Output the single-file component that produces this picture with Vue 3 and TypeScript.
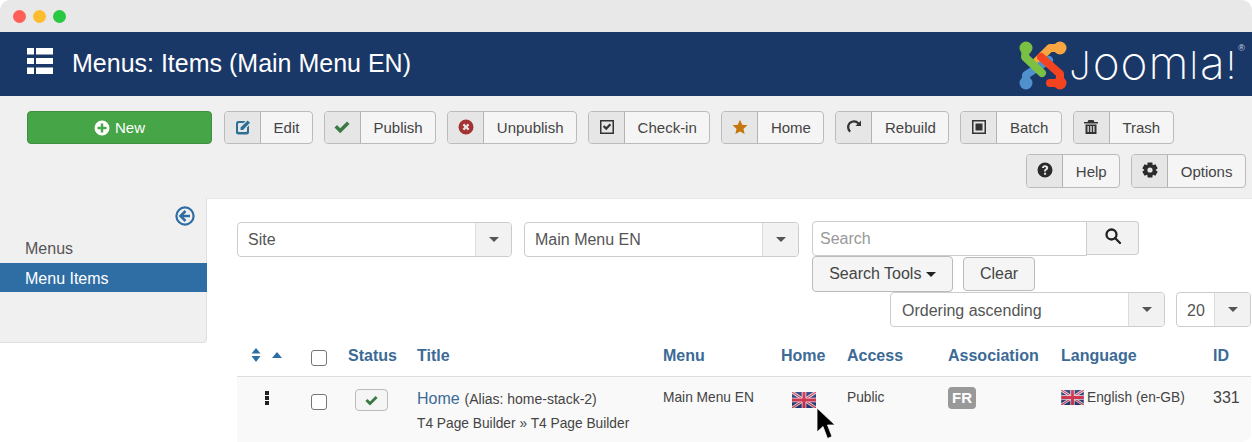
<script setup lang="ts">
interface ToolButton {
  label: string
  color: string
  d: string
}

// six toothed cog, hole punched with evenodd
function cogPath(): string {
  const pts: string[] = []
  for (let i = 0; i < 6; i++) {
    const a = (i * Math.PI) / 3 - Math.PI / 2
    const w = 0.3
    const ps = [
      [5.6, a - 0.52],
      [7.9, a - w],
      [7.9, a + w],
      [5.6, a + 0.52],
    ]
    ps.forEach(([r, t]) => {
      pts.push(`${(8 + r * Math.cos(t)).toFixed(2)} ${(8 + r * Math.sin(t)).toFixed(2)}`)
    })
  }
  return `M${pts.join('L')}z M8 5.4a2.6 2.6 0 1 0 0 5.2 2.6 2.6 0 0 0 0-5.2z`
}

const firstRow: ToolButton[] = [
  { label: 'Edit', color: '#2f6f96', d: 'M3 2h7.5L8.5 4H4a1 1 0 0 0-1 1v7a1 1 0 0 0 1 1h7a1 1 0 0 0 1-1V8.5l2-2V13a2.5 2.5 0 0 1-2.500 2.500H3.500A2.500 2.500 0 0 1 1 13V4.500A2.500 2.500 0 0 1 3 2z M12.700 1.500l2.300 2.300L8 11H5.500V8.500z' },
  { label: 'Publish', color: '#3b7a42', d: 'M.5 8.500L3 6l3.200 3.200L13 2.500 15.500 5 6.200 14.200z' },
  { label: 'Unpublish', color: '#a33232', d: 'M8 .5a7.500 7.500 0 1 0 0 15 7.500 7.500 0 0 0 0-15z M4.600 6.200L6.200 4.600 8 6.400l1.800-1.800 1.600 1.600L9.600 8l1.800 1.800-1.600 1.600L8 9.600l-1.800 1.800-1.600-1.600L6.400 8z' },
  { label: 'Check-in', color: '#333333', d: 'M1 1h14v14H1z M2.500 2.500v11h11v-11z M3.800 7.800l1.600-1.600 1.800 1.800 3.400-3.500 1.600 1.600-5 5.100z' },
  { label: 'Home', color: '#c4770c', d: 'M8 .8l2.200 4.900 5.300.6-4 3.500 1.100 5.300L8 12.400l-4.600 2.700 1.100-5.300-4-3.500 5.300-.6z' },
  { label: 'Rebuild', color: '#333333', d: 'M15 1.500v5.500H9.500l2-2A4.700 4.700 0 0 0 3.300 8c0 1.500.6 2.900 1.700 3.800l-1.600 1.700A7 7 0 0 1 1 8a7 7 0 0 1 12.100-4.500z' },
  { label: 'Batch', color: '#333333', d: 'M1 1h14v14H1z M2.500 2.500v11h11v-11z M4.500 4.500h7v7h-7z' },
  { label: 'Trash', color: '#333333', d: 'M5.500 1h5l1 2H15v1.500H1V3h3.500z M2.500 5.500h11V15h-11z M4.500 7v6h1.300V7z M7.300 7v6h1.400V7z M10.200 7v6h1.300V7z' },
]

const secondRow: ToolButton[] = [
  { label: 'Help', color: '#2b2b2b', d: 'M8 .5a7.500 7.500 0 1 0 0 15 7.500 7.500 0 0 0 0-15z M7 10.800h2.100v2H7z M4.900 6C5 4.300 6.300 3.200 8.100 3.200c1.800 0 3.100 1.100 3.100 2.600 0 1.200-.7 1.800-1.400 2.300-.5.400-.7.600-.7 1.300H7c0-1.200.4-1.800 1.100-2.300.5-.4.900-.7.900-1.200 0-.5-.4-.8-1-.8-.6 0-1 .4-1.100 1z' },
  { label: 'Options', color: '#2b2b2b', d: cogPath() },
]

const columns: string[] = ['Menu', 'Home', 'Access', 'Association', 'Language', 'ID']
</script>

<template>
  <div class="window">
    <svg class="defs" width="0" height="0">
      <defs>
        <linearGradient id="shine" x1="0" y1="0" x2="0" y2="1">
          <stop offset="0" stop-color="#fff" stop-opacity="0.12" />
          <stop offset="1" stop-color="#000" stop-opacity="0.12" />
        </linearGradient>
        <symbol id="uk" viewBox="0 0 24 16">
          <rect width="24" height="16" fill="#28397a" />
          <path d="M0 0L24 16M24 0L0 16" stroke="#efe6ea" stroke-width="2.800" />
          <path d="M0 0L24 16M24 0L0 16" stroke="#d8405a" stroke-width="1.200" />
          <path d="M12 0V16M0 8H24" stroke="#f2e6ea" stroke-width="4.600" />
          <path d="M12 0V16M0 8H24" stroke="#d92d4c" stroke-width="3" />
          <rect width="24" height="16" fill="url(#shine)" />
        </symbol>
      </defs>
    </svg>

    <div class="titlebar">
      <span class="light red"></span>
      <span class="light amber"></span>
      <span class="light green"></span>
    </div>

    <header class="masthead">
      <svg class="menu-icon" viewBox="0 0 26 26" width="26" height="26" fill="#fff">
        <path d="M0 0h7v6.500H0z M9 0h17v6.500H9z M0 10h7v6H0z M9 10h17v6H9z M0 19.500h7V26H0z M9 19.500h17V26H9z" />
      </svg>
      <h1>Menus: Items (Main Menu EN)</h1>
      <div class="brand">
        <svg class="brand-mark" viewBox="0 0 60 54" width="60" height="54" fill="none" stroke-linecap="round" stroke-linejoin="round">
          <path d="M46 10L36 10L20 26" stroke="#f9a541" stroke-width="8" />
          <circle cx="46" cy="10" r="6.500" fill="#f9a541" />
          <path d="M12 45L12 37L35 22" stroke="#5091cd" stroke-width="8" />
          <circle cx="12" cy="45" r="6.500" fill="#5091cd" />
          <path d="M12 9L11 19L28 35" stroke="#7ac143" stroke-width="8" />
          <circle cx="12" cy="10" r="6.500" fill="#7ac143" />
          <path d="M27 19L46 36L46 45L36 45" stroke="#f44321" stroke-width="8" />
          <circle cx="46" cy="45" r="6.500" fill="#f44321" />
        </svg>
        <span class="wordmark"><span class="tall-letter">J</span><span class="round">oom</span><span class="tall-letter">l</span><span class="round">a</span><span class="tall-letter">!</span></span>
        <sup class="reg">®</sup>
      </div>
    </header>

    <section class="toolbar">
      <div class="tool-row">
        <button class="btn-new">
          <svg viewBox="0 0 16 16" width="16" height="16" fill="#fff" fill-rule="evenodd">
            <path d="M8 .5a7.500 7.500 0 1 0 0 15 7.500 7.500 0 0 0 0-15z M6.800 3.500h2.400v3.300h3.300v2.400H9.200v3.300H6.800V9.200H3.500V6.800h3.300z" />
          </svg>
          New
        </button>
        <button v-for="b in firstRow" :key="b.label" class="tool">
          <span class="tool-icon">
            <svg viewBox="0 0 16 16" width="16" height="16" fill-rule="evenodd" :fill="b.color"><path :d="b.d" /></svg>
          </span>
          <span class="tool-label">{{ b.label }}</span>
        </button>
      </div>
      <div class="tool-row right">
        <button v-for="b in secondRow" :key="b.label" class="tool tall">
          <span class="tool-icon">
            <svg viewBox="0 0 16 16" width="16" height="16" fill-rule="evenodd" :fill="b.color"><path :d="b.d" /></svg>
          </span>
          <span class="tool-label">{{ b.label }}</span>
        </button>
      </div>
    </section>

    <div class="body">
      <aside class="sidebar">
        <div class="collapse">
          <svg viewBox="0 0 20 20" width="20" height="20" fill="none" stroke="#2f6ea5">
            <circle cx="10" cy="10" r="8.600" stroke-width="2.200" />
            <path d="M10.500 5L5.500 10l5 5M6 10h9" stroke-width="2.600" />
          </svg>
        </div>
        <a class="side-link">Menus</a>
        <a class="side-link active">Menu Items</a>
      </aside>

      <main class="content">
        <div class="filters">
          <div class="select wide"><span>Site</span><i class="select-arrow"><b class="caret"></b></i></div>
          <div class="select wide"><span>Main Menu EN</span><i class="select-arrow"><b class="caret"></b></i></div>
          <div class="search-group">
            <div class="search-line">
              <div class="search-input">Search</div>
              <button class="search-btn">
                <svg viewBox="0 0 16 16" width="16" height="16" fill="none" stroke="#222" stroke-width="2.300">
                  <circle cx="6.500" cy="6.500" r="5" />
                  <path d="M10 10l5 5" stroke-linecap="round" />
                </svg>
              </button>
            </div>
            <div class="search-actions">
              <button class="plain tools">Search Tools <b class="caret dark"></b></button>
              <button class="plain clear">Clear</button>
            </div>
          </div>
        </div>

        <div class="ordering">
          <div class="select wide"><span>Ordering ascending</span><i class="select-arrow"><b class="caret"></b></i></div>
          <div class="select small"><span>20</span><i class="select-arrow"><b class="caret"></b></i></div>
        </div>

        <div class="grid head">
          <div class="sort">
            <svg viewBox="0 0 10 14" width="10" height="14" fill="#2f6ea5"><path d="M5 0l4.500 5.500h-9zM5 14L.5 8h9z" /></svg>
            <svg viewBox="0 0 10 6" width="10" height="6" fill="#2f6ea5"><path d="M5 0l5 6H0z" /></svg>
          </div>
          <div><span class="check"></span></div>
          <div>Status</div>
          <div>Title</div>
          <div v-for="c in columns" :key="c">{{ c }}</div>
        </div>

        <div class="grid row">
          <div class="drag"><i></i><i></i><i></i></div>
          <div class="check-cell"><span class="check"></span></div>
          <div>
            <span class="status-btn">
              <svg viewBox="0 0 16 16" width="13" height="13" fill="#3b7a42"><path d="M.5 8.500L3 6l3.200 3.200L13 2.500 15.500 5 6.200 14.200z" /></svg>
            </span>
          </div>
          <div class="title-cell">
            <div class="title-line"><a class="item-link">Home</a> <span class="alias">(Alias: home-stack-2)</span></div>
            <div class="item-type">T4 Page Builder » T4 Page Builder</div>
          </div>
          <div class="small-text">Main Menu EN</div>
          <div class="home-flag"><svg width="24" height="16"><use href="#uk" /></svg></div>
          <div class="small-text">Public</div>
          <div><span class="badge">FR</span></div>
          <div class="lang small-text"><svg width="23" height="15"><use href="#uk" /></svg>English (en-GB)</div>
          <div class="id">331</div>
        </div>
      </main>
    </div>

    <!-- mouse pointer from the capture -->
    <svg class="pointer" viewBox="0 0 20 33" width="20" height="33">
      <path d="M1 1V25L7 19.500 11.500 31.500 16 29.500 11.500 18H19z" fill="#000" stroke="#fff" stroke-width="0.800" />
    </svg>
  </div>
</template>

<style>
html,
body {
  margin: 0;
  background: #fff;
}
</style>

<style scoped>
.window {
  position: relative;
  width: 1252px;
  height: 442px;
  overflow: hidden;
  border-radius: 10px;
  background: #fff;
  font-family: "Liberation Sans", Arial, sans-serif;
  color: #444;
}

.defs {
  position: absolute;
}

.titlebar {
  height: 32px;
  background: #e8e8e8;
  display: flex;
  align-items: center;
  gap: 7px;
  padding: 0 0 0 13px;
  box-sizing: border-box;
}

.light {
  width: 13px;
  height: 13px;
  border-radius: 50%;
}

.red { background: #ff5f57; }
.amber { background: #ffbd2e; }
.green { background: #28c840; }

.masthead {
  height: 64px;
  background: #1a3867;
  display: flex;
  align-items: center;
  padding-left: 27px;
  color: #fff;
}

.menu-icon {
  margin-right: 19px;
  margin-bottom: 6px;
}

.masthead h1 {
  margin: 0 0 2px;
  font-size: 25px;
  font-weight: 400;
}

.brand {
  margin-left: auto;
  display: flex;
  align-items: center;
  padding-right: 7px;
  margin-top: 2px;
}

.brand-mark {
  margin-right: -5px;
}

.wordmark {
  font-family: Inter, "Liberation Sans", sans-serif;
  font-weight: 200;
  line-height: 54px;
  white-space: nowrap;
  margin-top: 4px;
}

.tall-letter {
  font-size: 38px;
  letter-spacing: 2px;
}

.round {
  font-size: 46px;
  letter-spacing: 1px;
}

.reg {
  font-size: 9px;
  align-self: flex-start;
  line-height: 10px;
  margin-top: 12px;
  color: #cdd5e0;
}

.toolbar {
  height: 102px;
  box-sizing: border-box;
  background: #f0f0f0;
  padding: 15px 6px 0 27px;
  display: flex;
  flex-direction: column;
  gap: 10px;
}

.tool-row {
  display: flex;
  gap: 11px;
}

.tool-row.right {
  justify-content: flex-end;
}

button {
  font-family: inherit;
  padding: 0;
  margin: 0;
}

.btn-new {
  width: 185px;
  height: 33px;
  margin-right: 1px;
  background: #46a546;
  border: 1px solid #3f8f40;
  border-radius: 4px;
  color: #fff;
  font-size: 15px;
  display: flex;
  align-items: center;
  justify-content: center;
  gap: 5px;
}

.tool {
  height: 33px;
  display: flex;
  align-items: stretch;
  background: #f5f5f5;
  border: 1px solid #bbb;
  border-radius: 4px;
  color: #444;
  font-size: 15px;
  overflow: hidden;
}

.tool.tall {
  height: 34px;
}

.tool-icon {
  width: 35px;
  background: #e6e6e6;
  border-right: 1px solid #b3b3b3;
  display: flex;
  align-items: center;
  justify-content: center;
  padding-bottom: 2px;
  box-sizing: content-box;
}

.tool-label {
  padding: 0 12.56px;
  display: flex;
  align-items: center;
}

.body {
  display: flex;
  align-items: flex-start;
}

.sidebar {
  width: 207px;
  height: 145px;
  flex-shrink: 0;
  background: #f0f0f0;
  box-sizing: border-box;
  border-bottom: 1px solid #e0e0e0;
  box-shadow: inset -1px 0 0 #e0e0e0;
  border-bottom-right-radius: 4px;
}

.collapse {
  height: 36px;
  display: flex;
  justify-content: flex-end;
  align-items: flex-end;
  padding-right: 12px;
  box-sizing: border-box;
  padding-bottom: 8px;
}

.side-link {
  display: flex;
  align-items: center;
  height: 29px;
  box-sizing: border-box;
  padding: 1px 0 0 25px;
  font-size: 16px;
  color: #555;
}

.side-link.active {
  padding-top: 2px;
  background: #2f6ea5;
  color: #fff;
}

.content {
  flex: 1;
  min-width: 0;
  background: #fff;
  border-top: 1px solid #e6e6e6;
  padding: 23px 1px 0 30px;
}

.filters {
  display: flex;
  gap: 12px;
  height: 70px;
}

.filters .select span {
  padding-left: 10px;
}

.ordering {
  display: flex;
  justify-content: flex-end;
  gap: 11px;
}

.ordering .select span {
  padding-top: 2px;
}

.select {
  height: 35px;
  box-sizing: border-box;
  border: 1px solid #ccc;
  border-radius: 4px;
  background: #fff;
  display: flex;
  font-size: 16px;
  color: #555;
  overflow: hidden;
}

.select.wide {
  width: 275px;
}

.select.small {
  width: 75px;
}

.select.small span {
  padding-left: 10px;
}

.select span {
  flex: 1;
  padding: 1px 0 0 11px;
  display: flex;
  align-items: center;
}

.select-arrow {
  width: 35px;
  background: #f2f2f2;
  border-left: 1px solid #ddd;
  display: flex;
  align-items: center;
  justify-content: center;
}

.caret {
  width: 0;
  height: 0;
  border-left: 5px solid transparent;
  border-right: 5px solid transparent;
  border-top: 5px solid #555;
}

.caret.dark {
  display: inline-block;
  vertical-align: 2px;
  border-top-color: #222;
}

.search-group {
  margin: -1px 0 0 1px;
}

.search-line {
  display: flex;
}

.search-input {
  width: 275px;
  height: 35px;
  box-sizing: border-box;
  border: 1px solid #ccc;
  border-radius: 4px 0 0 4px;
  padding-left: 7px;
  font-size: 16px;
  line-height: 33px;
  color: #999;
}

.search-btn {
  width: 52px;
  height: 34px;
  background: #f2f2f2;
  border: 1px solid #ccc;
  border-left: 0;
  border-radius: 0 4px 4px 0;
  display: flex;
  align-items: center;
  justify-content: center;
  padding-bottom: 4px;
}

.search-actions {
  display: flex;
  align-items: center;
  gap: 10px;
}

.plain {
  background: #f5f5f5;
  border: 1px solid #bbb;
  border-radius: 4px;
  font-size: 16px;
  color: #444;
}

.tools {
  width: 141px;
  height: 36px;
}

.clear {
  width: 72px;
  height: 34px;
}

.grid {
  display: grid;
  grid-template-columns: 74px 37px 69px 246px 118px 66px 101px 113px 152px 39px;
}

.head {
  margin-top: 14px;
  height: 36px;
  box-sizing: border-box;
  border-bottom: 1px solid #ddd;
  align-items: center;
  font-size: 16px;
  font-weight: 700;
  color: #3b6a96;
  padding-bottom: 5px;
}

.sort {
  display: flex;
  align-items: center;
  gap: 11px;
  padding-left: 14px;
  margin-bottom: 2px;
}

.check {
  display: block;
  width: 16px;
  height: 16px;
  box-sizing: border-box;
  border: 1px solid #767676;
  border-radius: 3px;
  background: #fff;
}

.head .check {
  margin-top: 3px;
}

.row {
  background: #f9f9f9;
  height: 66px;
  align-items: start;
  padding-top: 12px;
  box-sizing: border-box;
}

.row > div {
  min-width: 0;
}

.drag {
  display: flex;
  flex-direction: column;
  gap: 1px;
  padding: 2px 0 0 28px;
}

.drag i {
  width: 4px;
  height: 4px;
  background: #222;
}

.check-cell {
  padding-top: 5px;
}

.status-btn {
  display: flex;
  align-items: center;
  justify-content: center;
  margin-left: 7px;
  width: 33px;
  height: 22px;
  box-sizing: border-box;
  background: #f5f5f5;
  border: 1px solid #bbb;
  border-radius: 4px;
}

.title-cell {
  font-size: 13.75px;
  white-space: nowrap;
}

.title-line {
  padding-top: 1px;
}

.item-link {
  font-size: 16px;
  color: #3b6a96;
}

.alias {
  font-size: 14px;
  margin-left: 1px;
}

.item-type {
  margin-top: 8px;
}

.small-text {
  font-size: 13.75px;
  line-height: 16px;
  padding-top: 1px;
}

.home-flag {
  padding: 3px 0 0 11px;
  height: 16px;
}

.badge {
  display: block;
  width: 28px;
  height: 22px;
  line-height: 22px;
  text-align: center;
  background: #999;
  color: #fff;
  border-radius: 4px;
  font-size: 15px;
  font-weight: 700;
  margin-top: -2px;
}

.lang {
  display: flex;
  align-items: flex-start;
  gap: 3px;
}

.id {
  font-size: 16px;
  line-height: 18px;
}

.pointer {
  position: absolute;
  left: 816px;
  top: 407px;
}
</style>
